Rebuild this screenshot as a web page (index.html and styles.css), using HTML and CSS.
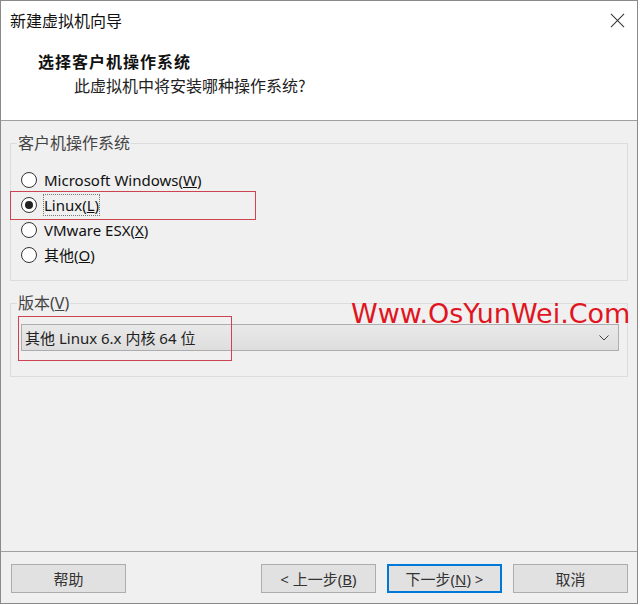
FILE: index.html
```html
<!DOCTYPE html>
<html lang="zh-CN">
<head>
<meta charset="utf-8">
<title>新建虚拟机向导</title>
<link rel="stylesheet" href="styles.css">
</head>
<body>
<div class="window">
  <div class="header">
    <div class="titlebar">
      <span class="title">新建虚拟机向导</span>
      <svg class="close" width="16" height="16" viewBox="0 0 16 16"><path d="M1 1L15 15M15 1L1 15" stroke="#333" stroke-width="1.1" fill="none"/></svg>
    </div>
    <div class="heading">选择客户机操作系统</div>
    <div class="subheading">此虚拟机中将安装哪种操作系统?</div>
  </div>
  <div class="content">
    <fieldset class="group os">
      <legend>客户机操作系统</legend>
      <div class="radio-row"><span class="radio"></span><span class="lbl">Microsoft Windows(<u>W</u>)</span></div>
      <div class="radio-row"><span class="radio checked"></span><span class="lbl focus">Linux(<u>L</u>)</span></div>
      <div class="radio-row"><span class="radio"></span><span class="lbl">VMware ESX(<u>X</u>)</span></div>
      <div class="radio-row"><span class="radio"></span><span class="lbl">其他(<u>O</u>)</span></div>
    </fieldset>
    <fieldset class="group version">
      <legend>版本(<u>V</u>)</legend>
      <div class="select">
        <span class="select-text">其他 Linux 6.x 内核 64 位</span>
        <svg class="chev" width="10" height="6" viewBox="0 0 10 6"><path d="M0.5 0.5L5 5L9.5 0.5" stroke="#444" stroke-width="1" fill="none"/></svg>
      </div>
    </fieldset>
  </div>
  <div class="footer">
    <button class="btn">帮助</button>
    <div class="spacer"></div>
    <button class="btn">&lt; 上一步(<u>B</u>)</button>
    <button class="btn primary">下一步(<u>N</u>) &gt;</button>
    <button class="btn">取消</button>
  </div>
  <div class="annot annot-linux"></div>
  <div class="annot annot-version"></div>
  <div class="watermark">Www.OsYunWei.Com</div>
</div>
</body>
</html>
```
FILE: styles.css
```css
* { box-sizing: border-box; }
html, body { margin: 0; padding: 0; background: #fff; }
body { font-family: "Noto Sans", "Noto Sans CJK SC", sans-serif; font-size: 15px; color: #000; }

.window {
  position: relative;
  width: 638px;
  height: 604px;
  border: 1px solid #8a8a8a;
  background: #f0f0f0;
  display: flex;
  flex-direction: column;
}

.header {
  height: 120px;
  background: #fff;
  border-bottom: 1px solid #a0a0a0;
  flex: none;
}
.titlebar {
  height: 38px;
  display: flex;
  align-items: center;
  justify-content: space-between;
  padding: 0 12px 0 9px;
}
.title { font-family: "Noto Sans CJK SC", sans-serif; font-size: 16px; line-height: 20px; color: #111; }
.close { display: block; width: 15px; height: 15px; }
.heading {
  margin-top: 10px;
  padding-left: 37px;
  font-family: "Noto Sans CJK SC", sans-serif;
  font-weight: 700;
  font-size: 16px;
  letter-spacing: 1px;
  line-height: 24px;
  color: #111;
}
.subheading {
  padding-left: 73px;
  font-family: "Noto Sans CJK SC", sans-serif;
  font-size: 16px;
  line-height: 24px;
  color: #222;
}

.content {
  flex: 1;
  padding-top: 12px;
}
.group {
  margin: 0 9px;
  border: 1px solid #dcdcdc;
  padding: 0;
  min-width: 0;
}
.group legend {
  margin-left: -4px;
  padding: 0 1px;
  font-family: "Noto Sans", "Noto Sans CJK SC", sans-serif;
  font-size: 16px;
  line-height: 20px;
  color: #444;
}
.os { padding: 14px 0 13px 10px; }
.radio-row {
  height: 25px;
  display: flex;
  align-items: center;
}
.radio {
  width: 16px;
  height: 16px;
  border: 1px solid #333;
  border-radius: 50%;
  background: #fff;
  display: flex;
  align-items: center;
  justify-content: center;
  flex: none;
}
.radio.checked::after {
  content: "";
  width: 8px;
  height: 8px;
  border-radius: 50%;
  background: #222;
}
.lbl { margin-left: 7px; line-height: 20px; color: #111; }
.lbl.focus { outline: 1px dotted #777; outline-offset: 0; }

.version { margin-top: 12px; padding: 11px 8px 25px 10px; }
.select {
  height: 27px;
  border: 1px solid #adadad;
  background: linear-gradient(#e9e9e9, #dedede);
  display: flex;
  align-items: center;
  justify-content: space-between;
  padding: 0 9px 0 3px;
}
.select-text { color: #222; line-height: 20px; }
.chev { display: block; }

.footer {
  height: 52px;
  flex: none;
  border-top: 1px solid #a0a0a0;
  display: flex;
  align-items: flex-start;
  gap: 11px;
  padding: 12px 9px 0 10px;
}
.spacer { flex: 1; }
.btn {
  width: 115px;
  height: 29px;
  border: 1px solid #adadad;
  background: #e1e1e1;
  font-family: "Noto Sans", "Noto Sans CJK SC", sans-serif;
  font-size: 15px;
  color: #333;
  padding: 0;
  display: flex;
  align-items: center;
  justify-content: center;
}
.btn.primary { border: 2px solid #0078d7; }

.annot {
  position: absolute;
  border: 1px solid #cc4450;
}
.annot-linux { left: 9px; top: 190px; width: 246px; height: 29px; }
.annot-version { left: 17px; top: 315px; width: 214px; height: 45px; }
.watermark {
  position: absolute;
  left: 350px;
  top: 299px;
  font-family: "DejaVu Sans", sans-serif;
  font-size: 27px;
  line-height: 27px;
  color: #e0151f;
  white-space: nowrap;
}
```
